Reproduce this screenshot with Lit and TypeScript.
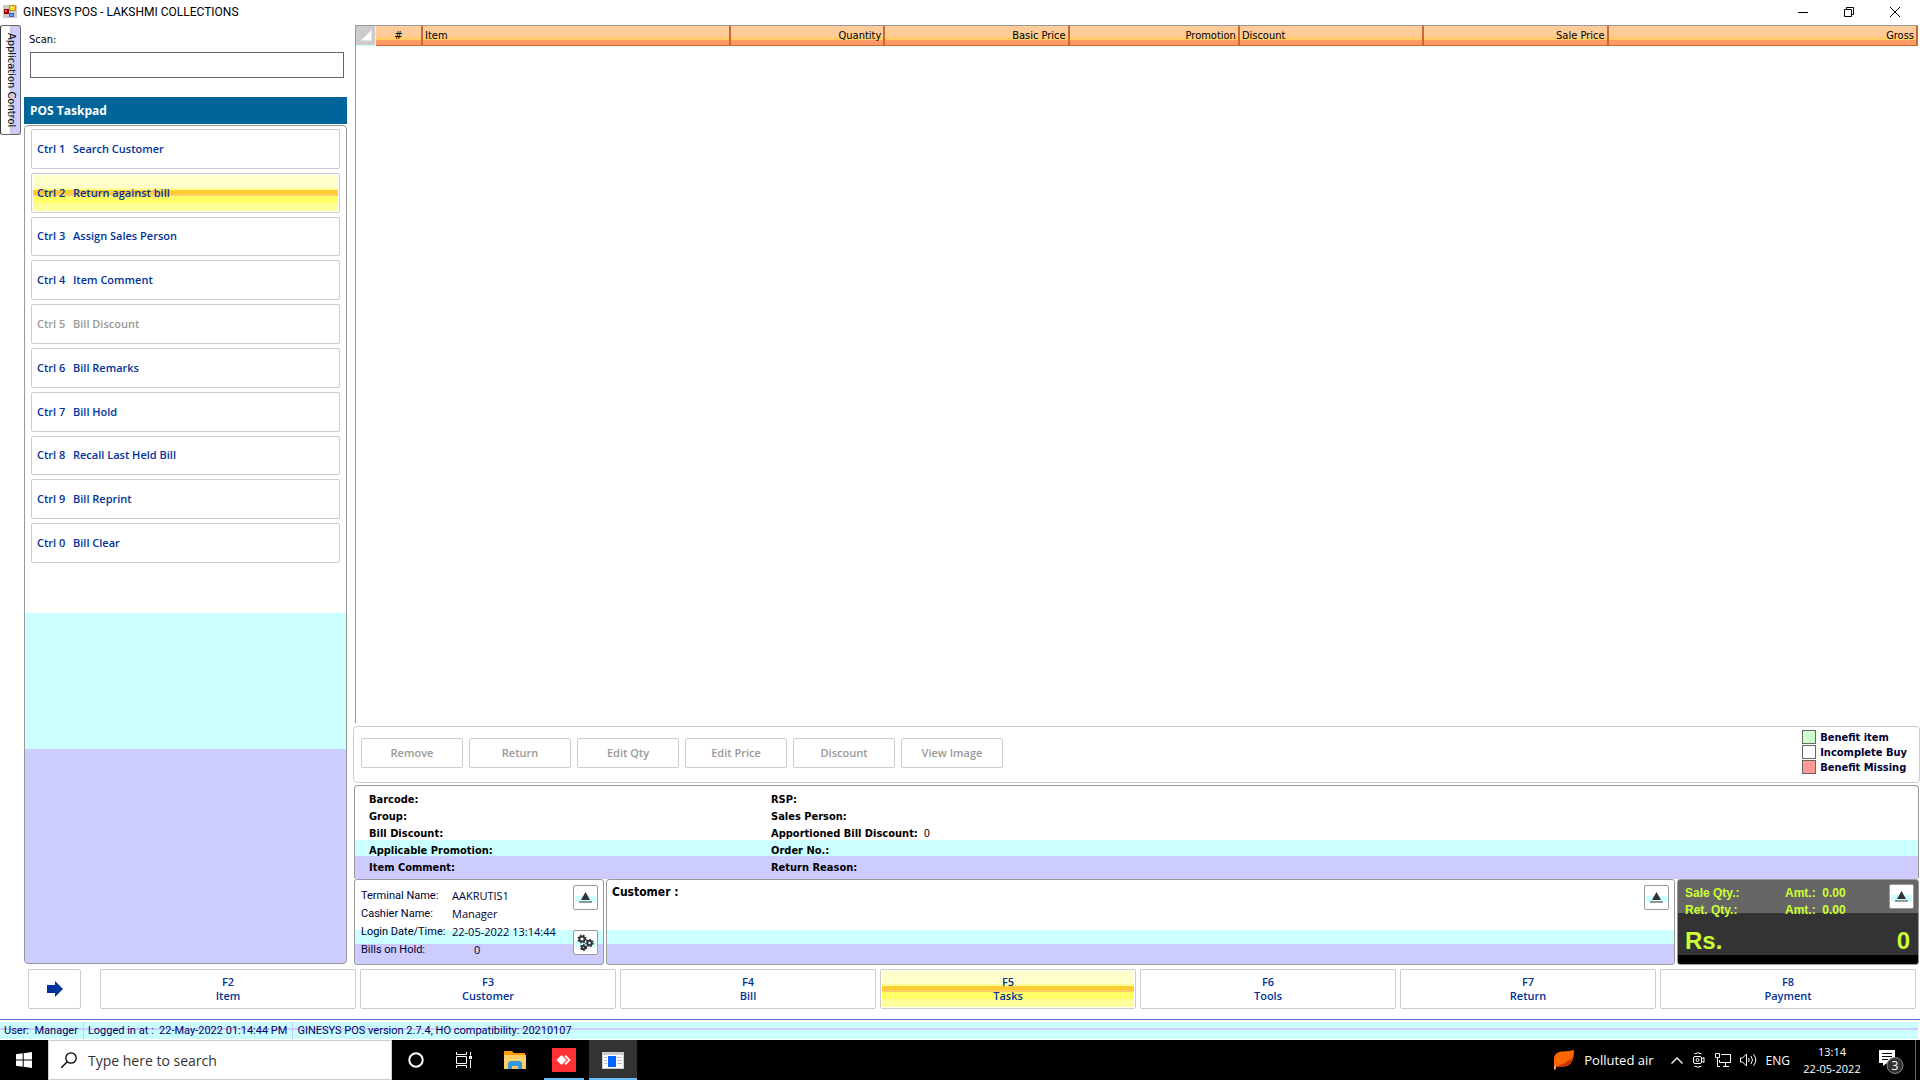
import { LitElement, html, svg, css, nothing } from "lit";
import { customElement, property, state } from "lit/decorators.js";
import { classMap } from "lit/directives/class-map.js";

interface Task {
  key: string;
  label: string;
  disabled?: boolean;
}

const TASKS: Task[] = [
  { key: "Ctrl 1", label: "Search Customer" },
  { key: "Ctrl 2", label: "Return against bill" },
  { key: "Ctrl 3", label: "Assign Sales Person" },
  { key: "Ctrl 4", label: "Item Comment" },
  { key: "Ctrl 5", label: "Bill Discount", disabled: true },
  { key: "Ctrl 6", label: "Bill Remarks" },
  { key: "Ctrl 7", label: "Bill Hold" },
  { key: "Ctrl 8", label: "Recall Last Held Bill" },
  { key: "Ctrl 9", label: "Bill Reprint" },
  { key: "Ctrl 0", label: "Bill Clear" },
];

const COLUMNS = [
  { name: "#", cls: "num" },
  { name: "Item", cls: "item" },
  { name: "Quantity", cls: "qty right" },
  { name: "Basic Price", cls: "mid right" },
  { name: "Promotion", cls: "promo right" },
  { name: "Discount", cls: "mid" },
  { name: "Sale Price", cls: "mid right" },
  { name: "Gross", cls: "gross right" },
];

const ACTIONS = ["Remove", "Return", "Edit Qty", "Edit Price", "Discount", "View Image"];

const FUNCTIONS = [
  ["F2", "Item"],
  ["F3", "Customer"],
  ["F4", "Bill"],
  ["F5", "Tasks"],
  ["F6", "Tools"],
  ["F7", "Return"],
  ["F8", "Payment"],
];

const LEGEND = [
  ["benefit", "Benefit item"],
  ["incomplete", "Incomplete Buy"],
  ["missing", "Benefit Missing"],
];

const LEFT_DETAILS = ["Barcode:", "Group:", "Bill Discount:", "Applicable Promotion:", "Item Comment:"];
const RIGHT_DETAILS = [
  ["RSP:", ""],
  ["Sales Person:", ""],
  ["Apportioned Bill Discount:", "0"],
  ["Order No.:", ""],
  ["Return Reason:", ""],
];

const shared = css`
  * {
    box-sizing: border-box;
  }
  button,
  input {
    font: inherit;
    color: inherit;
    margin: 0;
    padding: 0;
    border: 0;
    background: none;
    border-radius: 0;
  }
  svg {
    display: block;
  }
`;

@customElement("pos-titlebar")
export class PosTitlebar extends LitElement {
  static styles = [
    shared,
    css`
      :host {
        display: flex;
        align-items: center;
        height: 25px;
        padding: 0 2px 2px 3px;
        font: 12px Roboto, sans-serif;
        color: #000;
      }
      .title {
        flex: 1;
        padding-left: 6px;
      }
      .control {
        width: 46px;
        height: 22px;
        display: grid;
        place-items: center;
      }
    `,
  ];

  render() {
    return html`
      <svg width="14" height="15" viewBox="0 0 14 15" shape-rendering="crispEdges">
        <path d="M0 1h14v13H0z" fill="#ccc" />
        <path d="M6 1h7v6H6z" fill="#c90" />
        <path d="M7 2h5v4H7z" fill="#fc3" />
        <path d="M8 3h2v1H8z" fill="#ffc" />
        <path d="M1 5h5v5H1z" fill="#900" />
        <path d="M2 6h2v2H2z" fill="#f66" />
        <path d="M6 9h5v4H6z" fill="#36c" />
        <path d="M7 10h3v2H7z" fill="#69f" />
      </svg>
      <span class="title">GINESYS POS - LAKSHMI COLLECTIONS</span>
      <button class="control" aria-label="Minimize">
        <svg width="10" height="10"><path d="M0 5.500h10" stroke="#000" /></svg>
      </button>
      <button class="control" aria-label="Restore">
        <svg width="10" height="10" fill="none" stroke="#000">
          <path d="M.5 2.500h7v7h-7zM2.500 2.500v-2h7v7h-2" />
        </svg>
      </button>
      <button class="control" aria-label="Close">
        <svg width="10" height="10"><path d="M0 0l10 10M10 0L0 10" stroke="#000" /></svg>
      </button>
    `;
  }
}

@customElement("pos-taskpad")
export class PosTaskpad extends LitElement {
  static styles = [
    shared,
    css`
      :host {
        display: flex;
        flex-direction: column;
        font: 11px Tahoma, "DejaVu Sans Condensed", sans-serif;
      }
      .scan {
        display: flex;
        flex-direction: column;
        padding: 8px 3px 19px 5px;
      }
      .scan label {
        line-height: 14px;
        padding-bottom: 5px;
      }
      .scan input {
        height: 26px;
        margin-left: 1px;
        padding: 0 4px;
        border: 1px solid #666;
        background: #fff;
      }
      h2 {
        margin: 0;
        padding: 0 6px;
        background: #069;
        color: #fff;
        font: bold 12px/27px "Open Sans", sans-serif;
      }
      .panel {
        flex: 1;
        margin-top: 1px;
        padding: 3px 6px;
        border: 1px solid #999;
        border-radius: 4px;
        background: linear-gradient(#fff 58.2%, #cff 58.2% 74.4%, #ccf 74.4%);
      }
      .tasks {
        display: grid;
        grid-auto-rows: 1fr;
        gap: 4px;
        height: 434px;
        margin: 0;
        padding: 0;
        list-style: none;
      }
      .task {
        display: flex;
        align-items: center;
        width: 100%;
        height: 100%;
        padding: 0 5px 1px;
        border: 1px solid #ccc;
        border-radius: 2px;
        background: #fff;
        color: #039;
        font: 600 11px "Open Sans", sans-serif;
        text-align: left;
      }
      .task:disabled {
        color: #999;
      }
      .task.active {
        background: linear-gradient(
          #ffc 36%, #ff9 36% 41%, #fc3 41% 53%, #fc6 53% 58%, #ff6 58% 79%, #ff9 79%
        ) content-box;
        padding: 1px;
      }
      .task.active .key {
        margin-left: 4px;
      }
      .key {
        width: 36px;
      }
    `,
  ];

  @state() private active = "Ctrl 2";

  render() {
    return html`
      <div class="scan">
        <label for="scan">Scan:</label>
        <input id="scan" type="text" />
      </div>
      <h2>POS Taskpad</h2>
      <div class="panel">
        <ul class="tasks">
          ${TASKS.map(
            (t) => html`<li>
              <button
                class=${classMap({ task: true, active: t.key === this.active })}
                ?disabled=${t.disabled}
                @click=${() => (this.active = t.key)}
              >
                <span class="key">${t.key}</span><span>${t.label}</span>
              </button>
            </li>`
          )}
        </ul>
      </div>
    `;
  }
}

@customElement("pos-icon-button")
export class PosIconButton extends LitElement {
  @property() icon = "up";
  @property() label = "";

  static styles = [
    shared,
    css`
      :host {
        display: block;
      }
      button {
        display: grid;
        place-items: center;
        width: 25px;
        height: 25px;
        border: 1px solid #999;
        border-radius: 2px;
        background: linear-gradient(#fff 44%, #cff 44% 68%, #fff 68%) content-box, #fff;
        padding: 0 1px;
      }
    `,
  ];

  private gear(cx: number, cy: number, r: number) {
    return svg`<g transform="translate(${cx} ${cy})" fill="none" stroke="#333">
      <circle r=${r} stroke-width="2" />
      <circle r=${r + 1} stroke-width="2" stroke-dasharray="1.400 1.500" />
    </g>`;
  }

  render() {
    return html`<button aria-label=${this.label}>
      ${this.icon === "up"
        ? html`<svg width="13" height="11" viewBox="0 0 13 11" fill="#333">
            <path d="M6.500 0L11 8H2z" />
            <path d="M0 9.500h13v1H0z" />
          </svg>`
        : html`<svg width="17" height="17" viewBox="0 0 17 17">
            ${this.gear(5, 5, 2.6)}${this.gear(12.5, 9, 2.2)}${this.gear(6.5, 13.5, 1.6)}
          </svg>`}
    </button>`;
  }
}

@customElement("pos-bill")
export class PosBill extends LitElement {
  static styles = [
    shared,
    css`
      :host {
        display: flex;
        flex-direction: column;
        font: 11px Tahoma, "DejaVu Sans Condensed", sans-serif;
        color: #000;
      }
      .grid {
        flex: 1;
        margin: 0 2px 3px;
        border: solid #999;
        border-width: 1px 0 0 1px;
      }
      table {
        width: 100%;
        table-layout: fixed;
        border-collapse: separate;
        border-spacing: 0;
      }
      th {
        height: 20px;
        padding: 0 2px;
        border-right: 2px solid #c63;
        border-bottom: 1px solid #c63;
        background: linear-gradient(#fc9 58%, #fc6 58% 74%, #f96 74%);
        font-weight: normal;
        line-height: 16px;
        text-align: left;
        white-space: nowrap;
      }
      th.corner {
        width: 20px;
        padding: 0 3px 0 5px;
        border-right: 1px solid #cff;
        border-bottom: 1px solid #cff;
        background: #ccc;
      }
      th.num {
        width: 47px;
        text-align: center;
      }
      th.right {
        text-align: right;
      }
      .item {
        width: 19.7%;
      }
      .qty {
        width: 9.9%;
      }
      .mid {
        width: 11.8%;
      }
      .promo {
        width: 10.9%;
      }
      .actions {
        display: flex;
        justify-content: space-between;
        height: 57px;
        padding: 3px 12px 0 7px;
        border: 1px solid #ccc;
        border-radius: 4px;
      }
      .buttons {
        display: flex;
        gap: 6px;
        padding-top: 8px;
      }
      .buttons button {
        width: 102px;
        height: 30px;
        padding-bottom: 1px;
        border: 1px solid #ccc;
        border-radius: 2px;
        background: #fff;
        color: #999;
        font: 600 11px "Open Sans", sans-serif;
      }
      .legend {
        margin: 0;
        padding: 0;
        list-style: none;
        color: #003;
        font: bold 11px/15px Tahoma, "DejaVu Sans Condensed", sans-serif;
      }
      .legend li {
        display: flex;
        gap: 4px;
        height: 15px;
      }
      .swatch {
        width: 14px;
        height: 14px;
        border: 1px solid #666;
      }
      .benefit {
        background: #cfc;
      }
      .missing {
        background: #f99;
      }
      .details {
        display: grid;
        grid-template-columns: 402px 1fr;
        height: 94px;
        margin: 2px 1px 0;
        padding: 5px 14px;
        border: 1px solid #999;
        border-bottom: 0;
        border-radius: 4px 4px 2px 2px;
        background: linear-gradient(#fff 58%, #cff 58% 75%, #ccf 75%);
        font-weight: bold;
      }
      .details ul {
        display: flex;
        flex-direction: column;
        margin: 0;
        padding: 0;
        list-style: none;
        line-height: 17px;
      }
      .value {
        padding-left: 6px;
        font-weight: normal;
      }
      .bottom {
        display: grid;
        grid-template-columns: 250px minmax(0, 1fr) 242px;
        gap: 2px;
        height: 85px;
        margin: 0 1px;
      }
      .card {
        display: flex;
        justify-content: space-between;
        padding: 5px;
        border: 1px solid #999;
        border-radius: 3px;
        background: linear-gradient(#fff 59%, #cff 59% 76%, #ccf 76%);
      }
      .terminal dl {
        display: grid;
        grid-template-columns: 91px auto;
        align-content: start;
        margin: 0;
        padding: 2px 0 0 1px;
        line-height: 18px;
        color: #003;
        font-family: "Open Sans", sans-serif;
      }
      .terminal dt {
        font-family: Roboto, sans-serif;
      }
      .terminal dd {
        margin: 0;
      }
      .terminal .count {
        padding-left: 22px;
      }
      .stack {
        display: flex;
        flex-direction: column;
        gap: 20px;
      }
      .customer {
        font: bold 12px/14px Tahoma, "DejaVu Sans Condensed", sans-serif;
      }
      .total {
        display: grid;
        grid-template-columns: 100px 1fr 25px;
        grid-template-rows: 17px 17px 1fr;
        padding: 4px 4px 3px 7px;
        border: 1px solid #999;
        border-radius: 3px;
        background: linear-gradient(#666 39%, #333 39% 89%, #000 89%);
        color: #cf3;
        font: bold 12px/18px "Liberation Sans", Arial, sans-serif;
      }
      .total pos-icon-button {
        grid-area: 1 / 3 / 3 / 4;
      }
      .total .amt {
        grid-column: 2;
      }
      .sum {
        grid-area: 3 / 1 / 4 / 4;
        display: flex;
        justify-content: space-between;
        align-items: center;
        padding: 2px 4px 0 0;
        font-size: 24px;
      }
    `,
  ];

  render() {
    return html`
      <div class="grid">
        <table>
          <thead>
            <tr>
              <th class="corner" aria-label="Select all">
                <svg width="11" height="11"><path d="M10.500 0v10.500H0z" fill="#fff" /></svg>
              </th>
              ${COLUMNS.map((c) => html`<th class=${c.cls} scope="col">${c.name}</th>`)}
            </tr>
          </thead>
          <tbody></tbody>
        </table>
      </div>
      <div class="actions">
        <div class="buttons">${ACTIONS.map((a) => html`<button disabled>${a}</button>`)}</div>
        <ul class="legend">
          ${LEGEND.map(([c, t]) => html`<li><span class="swatch ${c}"></span>${t}</li>`)}
        </ul>
      </div>
      <div class="details">
        <ul>
          ${LEFT_DETAILS.map((t) => html`<li>${t}</li>`)}
        </ul>
        <ul>
          ${RIGHT_DETAILS.map(
            ([t, v]) => html`<li>${t}${v ? html`<span class="value">${v}</span>` : nothing}</li>`
          )}
        </ul>
      </div>
      <div class="bottom">
        <section class="card terminal">
          <dl>
            <dt>Terminal Name:</dt>
            <dd>AAKRUTIS1</dd>
            <dt>Cashier Name:</dt>
            <dd>Manager</dd>
            <dt>Login Date/Time:</dt>
            <dd>22-05-2022 13:14:44</dd>
            <dt>Bills on Hold:</dt>
            <dd class="count">0</dd>
          </dl>
          <div class="stack">
            <pos-icon-button label="Expand terminal"></pos-icon-button>
            <pos-icon-button icon="gears" label="Settings"></pos-icon-button>
          </div>
        </section>
        <section class="card customer">
          <span>Customer :</span>
          <pos-icon-button label="Expand customer"></pos-icon-button>
        </section>
        <section class="total">
          <span>Sale Qty.:</span>
          <span class="amt">Amt.:&nbsp; 0.00</span>
          <pos-icon-button label="Expand total"></pos-icon-button>
          <span>Ret. Qty.:</span>
          <span class="amt">Amt.:&nbsp; 0.00</span>
          <div class="sum"><span>Rs.</span><span>0</span></div>
        </section>
      </div>
    `;
  }
}

@customElement("pos-function-bar")
export class PosFunctionBar extends LitElement {
  static styles = [
    shared,
    css`
      :host {
        display: grid;
        grid-template-columns: 53px 1fr;
        gap: 19px;
        padding: 5px 4px 10px 28px;
        font: 600 11px/14px "Open Sans", sans-serif;
      }
      .keys {
        display: grid;
        grid-template-columns: repeat(7, 1fr);
        gap: 4px;
      }
      button {
        display: grid;
        place-items: center;
        place-content: center;
        height: 40px;
        border: 1px solid #ccc;
        border-radius: 2px;
        background: #fff;
        color: #039;
      }
      button.active {
        padding: 1px;
        background: linear-gradient(
          #ffc 36%, #ff9 36% 41%, #fc3 41% 53%, #fc6 53% 58%, #ff6 58% 79%, #ff9 79%
        ) content-box;
      }
    `,
  ];

  @state() private active = "F5";

  render() {
    return html`
      <button aria-label="Next">
        <svg width="16" height="16" fill="#039"><path d="M0 4h8V0l8 8-8 8v-4H0z" /></svg>
      </button>
      <div class="keys">
        ${FUNCTIONS.map(
          ([k, t]) => html`<button
            class=${classMap({ active: k === this.active })}
            @click=${() => (this.active = k)}
          >
            <span>${k}</span><span>${t}</span>
          </button>`
        )}
      </div>
    `;
  }
}

@customElement("pos-status-bar")
export class PosStatusBar extends LitElement {
  static styles = [
    shared,
    css`
      :host {
        display: flex;
        height: 21px;
        padding: 2px 2px 1px 0;
        border-top: 1px solid #66c;
        background: linear-gradient(#cff 33%, #ccf 33% 50%, #cff 50%) content-box;
        color: #006;
        font: 11px/18px Roboto, sans-serif;
      }
      span {
        padding: 0 5px 0 4px;
        white-space: pre;
      }
      span + span {
        border-left: 1px solid #ccf;
      }
    `,
  ];

  render() {
    return html`<span>User:  Manager</span><span>Logged in at :  22-May-2022 01:14:44 PM</span
      ><span>GINESYS POS version 2.7.4, HO compatibility: 20210107</span>`;
  }
}

@customElement("desk-taskbar")
export class DeskTaskbar extends LitElement {
  static styles = [
    shared,
    css`
      :host {
        display: flex;
        height: 40px;
        background: #000;
        color: #fff;
        font: 12px "Segoe UI", "Open Sans", sans-serif;
      }
      button {
        display: grid;
        place-items: center;
      }
      .start {
        width: 48px;
      }
      .search {
        display: flex;
        align-items: center;
        gap: 11px;
        width: 344px;
        padding-left: 12px;
        border: 1px solid #ccc;
        background: #fff;
      }
      .search input {
        flex: 1;
        min-width: 0;
        outline: 0;
        font-size: 14px;
      }
      .search input::placeholder {
        color: #333;
        opacity: 1;
      }
      .apps {
        display: flex;
        flex: 1;
      }
      .apps button {
        width: 48px;
        border-bottom: 2px solid transparent;
        padding-top: 2px;
      }
      .apps .explorer {
        width: 54px;
      }
      .apps .app {
        width: 40px;
        margin: 0 5px 0 2px;
        border-color: #6bf;
      }
      .apps .current {
        width: 48px;
        background: #333;
        border-color: #6bf;
      }
      .tray {
        display: flex;
        align-items: center;
      }
      .weather {
        display: flex;
        align-items: center;
        gap: 10px;
        margin-right: 17px;
        font-size: 13px;
      }
      .icons {
        display: flex;
        align-items: center;
        gap: 9px;
      }
      .clock {
        display: block;
        width: 68px;
        margin-left: 8px;
        font-size: 11px;
        line-height: 17px;
        text-align: center;
        white-space: nowrap;
      }
      .notes {
        margin: 5px 11px 0 13px;
      }
      .desktop {
        width: 5px;
        height: 40px;
        border-left: 1px solid #666;
      }
    `,
  ];

  render() {
    return html`
      <button class="start" aria-label="Start">
        <svg width="16" height="16" fill="#fff">
          <path d="M0 2.300L6.700 1.300v6.200H0zM7.700 1.200L16 0v7.500H7.700zM0 8.500h6.700v6.200L0 13.700zM7.700 8.500H16V16l-8.300-1.200z" />
        </svg>
      </button>
      <label class="search">
        <svg width="16" height="16" fill="none" stroke="#000" stroke-width="1.300">
          <circle cx="10" cy="6" r="5.200" />
          <path d="M6.200 9.800L0 16" />
        </svg>
        <input type="text" placeholder="Type here to search" aria-label="Type here to search" />
      </label>
      <div class="apps">
        <button aria-label="Cortana">
          <svg width="16" height="16" fill="none" stroke="#fff" stroke-width="2">
            <circle cx="8" cy="8" r="6.700" />
          </svg>
        </button>
        <button aria-label="Task view">
          <svg width="17" height="16" fill="none" stroke="#fff">
            <path d="M.5 0v2.500h10V0M.5 4.500h10v7H.5zM.5 16v-2.500h10V16M14.500 0v3.500M14.500 8v8" />
            <path d="M13 4h3v3h-3z" fill="#fff" stroke="none" />
          </svg>
        </button>
        <button class="explorer" aria-label="File Explorer">
          <svg width="22" height="18">
            <path d="M0 0h8l2 2h11v4H0z" fill="#f90" />
            <path d="M0 4h22v14H0z" fill="#fc6" />
            <path d="M0 8h22v1H0z" fill="#fd7" />
            <path d="M4 18v-6l2-2h10l2 2v6h-4v-3H8v3z" fill="#39d" />
          </svg>
        </button>
        <button class="app" aria-label="AnyDesk">
          <svg width="24" height="24">
            <path d="M0 0h24v24H0z" fill="#f33" />
            <path d="M9.500 7l5 5-5 5-5-5z" fill="#fff" />
            <path d="M13 7.500l4.500 4.500-4.500 4.500" fill="none" stroke="#fff" stroke-width="1.800" />
          </svg>
        </button>
        <button class="current" aria-label="GINESYS POS">
          <svg width="22" height="17">
            <path d="M0 0h22v17H0z" fill="#ccc" />
            <path d="M1 3h20v13H1z" fill="#fff" />
            <path d="M6 4h8v11H6z" fill="#06f" />
            <path d="M2 5.500h3M2 8.500h3M2 11.500h3M15 5.500h5M15 8.500h5M15 11.500h5" stroke="#bbb" />
          </svg>
        </button>
      </div>
      <div class="tray">
        <button class="weather">
          <svg width="20" height="20">
            <path d="M0 19V9q0-7 8-7.500Q16 1 20 0q0 9-3 13-4 5-15 3.500V19z" fill="#f60" />
            <path d="M2 16.500Q12 13 18.500 8 18 11 17 13q-4 5-15 3.500z" fill="#c30" />
            <path d="M0 20v-4l2-1v4z" fill="#f96" />
          </svg>
          <span>Polluted air</span>
        </button>
        <div class="icons">
          <svg width="12" height="7" fill="none" stroke="#fff" stroke-width="1.300">
            <path d="M.5 6.500L6 1l5.500 5.500" />
          </svg>
          <svg width="14" height="16" fill="none" stroke="#fff">
            <rect x="1.500" y="4.500" width="8" height="7" rx="1.500" />
            <path d="M9.500 7l2.500-1.500v5L9.500 9M2.500 1.800q3.500-2 7 0M2.500 14.200q3.500 2 7 0" />
            <circle cx="5.500" cy="8" r="1.500" />
          </svg>
          <svg width="16" height="14" fill="none" stroke="#fff">
            <path d="M6 1.500h9.500v8H4.500V7M8 13.500h6M10.500 9.500v4" />
            <path d="M.5.5h4v4h-4zM2.500 4.500v9H5" />
          </svg>
          <svg width="17" height="14" fill="none" stroke="#fff">
            <path d="M.5 5h2L6.500 1v12l-4-4h-2zM8.500 5q1.500 2 0 4M11 3q3 4 0 8M13.500 1.200q4.500 5.800 0 11.600" />
          </svg>
          <span>ENG</span>
        </div>
        <time class="clock">13:14<br />22-05-2022</time>
        <button class="notes" aria-label="Notifications, 3 new">
          <svg width="25" height="25">
            <path d="M0 0h16v13H8l-4 3v-3H0z" fill="#fff" />
            <path d="M3 3.500h10M3 6.500h10M3 9.500h6" stroke="#000" />
            <circle cx="16" cy="15.500" r="8" fill="#333" stroke="#888" />
            <text x="16" y="20" fill="#fff" font-size="12" text-anchor="middle">3</text>
          </svg>
        </button>
        <div class="desktop"></div>
      </div>
    `;
  }
}

@customElement("app-root")
export class AppRoot extends LitElement {
  static styles = [
    shared,
    css`
      :host {
        display: flex;
        flex-direction: column;
        min-height: 100vh;
        background: #fff;
      }
      .work {
        flex: 1;
        display: grid;
        grid-template-columns: 20px 327px minmax(0, 1fr);
      }
      .tab {
        align-self: start;
        height: 110px;
        width: 21px;
        border: 1px solid #666;
        border-left-color: #333;
        border-radius: 3px;
        background: linear-gradient(90deg, #fff 40%, #cff 40% 48%, #ccc 48% 60%, #ccf 60%);
        font: 11px/18px Tahoma, "DejaVu Sans Condensed", sans-serif;
        writing-mode: vertical-rl;
        white-space: nowrap;
      }
      pos-taskpad {
        margin-left: 4px;
      }
      pos-bill {
        margin-left: 6px;
      }
    `,
  ];

  render() {
    return html`
      <pos-titlebar></pos-titlebar>
      <main class="work">
        <button class="tab">Application Control</button>
        <pos-taskpad></pos-taskpad>
        <pos-bill></pos-bill>
      </main>
      <pos-function-bar></pos-function-bar>
      <pos-status-bar></pos-status-bar>
      <desk-taskbar></desk-taskbar>
    `;
  }
}
